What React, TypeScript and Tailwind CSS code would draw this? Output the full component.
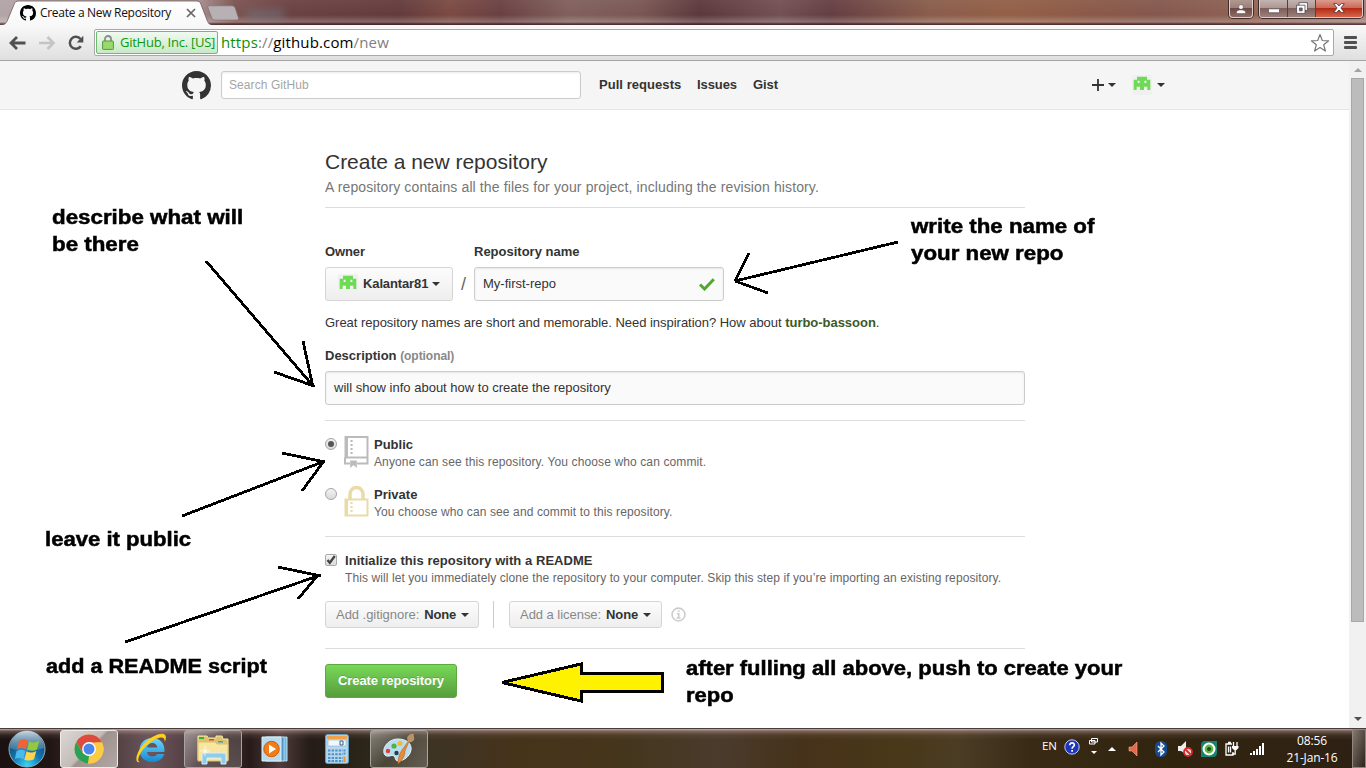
import React from "react";

const MARK =
  "M8 0C3.58 0 0 3.58 0 8c0 3.54 2.29 6.53 5.47 7.59.4.07.55-.17.55-.38 0-.19-.01-.82-.01-1.49-2.01.37-2.53-.49-2.69-.94-.09-.23-.48-.94-.82-1.13-.28-.15-.68-.52-.01-.53.63-.01 1.08.58 1.23.82.72 1.21 1.87.87 2.33.66.07-.52.28-.87.51-1.07-1.78-.2-3.64-.89-3.64-3.95 0-.87.31-1.59.82-2.15-.08-.2-.36-1.02.08-2.12 0 0 .67-.21 2.2.82.64-.18 1.32-.27 2-.27.68 0 1.36.09 2 .27 1.53-1.04 2.2-.82 2.2-.82.44 1.1.16 1.92.08 2.12.51.56.82 1.27.82 2.15 0 3.07-1.87 3.75-3.65 3.95.29.25.54.73.54 1.48 0 1.07-.01 1.93-.01 2.2 0 .21.15.46.55.38A8.013 8.013 0 0016 8c0-4.42-3.58-8-8-8z";

const Mark = ({ className }: { className: string }) => (
  <svg viewBox="0 0 16 16" className={className} fill="currentColor">
    <path d={MARK} />
  </svg>
);

const Avatar = () => (
  <svg viewBox="0 0 20 20" className="size-5 shrink-0">
    <rect width="20" height="20" rx="2" fill="#f0f0f0" />
    <path
      fill="#6ddb55"
      fillRule="evenodd"
      d="M5 1.700h10V4.700h3.300V15H15.400v-3.200h-3.400V15H8v-3.200H4.600V15H1.700V4.700H5zM5.600 5.700v2.300h2V5.700zM12.400 5.700v2.300h2V5.700z"
    />
  </svg>
);

const Caret = () => (
  <svg viewBox="0 0 8 4" className="h-1 w-2 shrink-0" fill="#333">
    <path d="M0 0h8L4 4z" />
  </svg>
);

const TitleBar = () => (
  <header className="relative flex h-[25px] shrink-0 items-start bg-[linear-gradient(90deg,#b3a5a6_0px,#a48c8c_200px,#7c5350_235px,#6b4143_290px,#633b3c_400px,#7a4a42_450px,#6a4042_500px,#80605c_570px,#7a5653_640px,#5c383c_700px,#735052_780px,#643e42_830px,#8a5d4b_930px,#935f46_1010px,#8a5848_1100px,#84584e_1160px,#8e6152_1240px,#a08077_1366px)]">
    <div className="absolute inset-0 bg-[linear-gradient(180deg,rgba(255,255,255,0.05)_0px,rgba(255,255,255,0)_15px,rgba(255,255,255,0.22)_22px,rgba(60,30,35,0.7)_24px,rgba(60,30,35,0.7)_25px)]" />
    <div className="absolute left-[246px] top-[10px] h-[10px] w-[38px] bg-[#6f7f8a]/50 blur-[4px]" />
    <svg className="absolute left-0 top-0 h-[25px] w-[244px]" viewBox="0 0 244 25">
      <defs>
        <linearGradient id="tab" x1="0" x2="0" y1="0" y2="1">
          <stop offset="0" stopColor="#fff" />
          <stop offset="1" stopColor="#f8f8f8" />
        </linearGradient>
      </defs>
      <path d="M0 25.5C5 25 6.500 23 8 19l6-14.500C15 1.800 16 1 19 1h177c3 0 4 .8 5 3.500l6 15.500c1.500 4 3 5 6 5.500z" fill="url(#tab)" stroke="#6e5a5c" strokeWidth=".8" />
      <path d="M208 8c-.6-1.500.2-2.200 1.500-2.200h22c2 0 3 .7 3.600 2l3.200 9.700c.5 1.600-.2 2.500-1.500 2.500h-21.300c-2 0-3-.5-3.600-2z" fill="#b7b1b6" stroke="#836b6d" strokeWidth=".6" />
    </svg>
    <div className="relative flex h-[25px] w-[204px] items-center pl-5">
      <Mark className="size-4 text-black" />
      <span className="ml-1 w-[136px] whitespace-nowrap font-['Open_Sans','Noto_Sans',sans-serif] text-[12px] tracking-[-0.3px] text-[#111]">
        Create a New Repository
      </span>
      <svg viewBox="0 0 10 10" className="ml-[10px] size-[10px]" stroke="#666" strokeWidth="1.700">
        <path d="M1 1l8 8M9 1L1 9" />
      </svg>
    </div>
    <div className="relative ml-auto mr-[3px] flex h-[18px] items-start">
      <div className="flex h-full w-6 items-center justify-center rounded-b-[4px] border border-t-0 border-[#e0cfcb] bg-[linear-gradient(#b09891_0%,#9d8179_45%,#6d4a45_50%,#8e6b64_100%)] shadow-[0_0_0_1px_#402c2c]">
        <svg viewBox="0 0 10 10" className="size-[10px]" fill="#fff" stroke="#50383a" strokeWidth=".4">
          <circle cx="5" cy="3" r="2.300" />
          <path d="M.5 9.500V8C.5 6.500 3 6 5 6s4.500.5 4.500 2v1.500z" />
        </svg>
      </div>
      <div className="ml-[6px] flex h-full overflow-hidden rounded-b-[4px] border border-t-0 border-[#dccbc8] shadow-[0_0_0_1px_#402c2c]">
        <div className="flex w-7 items-center justify-center border-r border-[#54403f] bg-[linear-gradient(#c3b3b1_0%,#ad9792_45%,#7d5f5b_50%,#9c807a_100%)]">
          <svg viewBox="0 0 12 6" className="mt-1 h-[6px] w-3">
            <rect x=".5" y=".8" width="11" height="4" rx=".5" fill="#fff" stroke="#5d5158" strokeWidth=".8" />
          </svg>
        </div>
        <div className="flex w-7 items-center justify-center border-r border-[#54403f] bg-[linear-gradient(#c3b3b1_0%,#ad9792_45%,#7d5f5b_50%,#9c807a_100%)]">
          <svg viewBox="0 0 12 12" className="mt-[-2px] size-3" stroke="#4d4650" strokeWidth=".8">
            <path d="M3 .6h8.400v8H3z" fill="#fff" />
            <path d="M.6 3.200h8.400v8.200H.6z" fill="#fff" />
            <path d="M3.400 6h2.800v2.800H3.400z" fill="#85696a" />
          </svg>
        </div>
        <div className="flex w-[46px] items-center justify-center bg-[linear-gradient(#dc9b8e_0%,#cc6a57_45%,#b42b15_50%,#d5654a_100%)]">
          <svg viewBox="0 0 12 10" className="mt-[-2px] h-[10px] w-3">
            <path d="M.6.6h3.200L6 3 8.200.6h3.200L7.900 5l3.500 4.400H8.200L6 7 3.800 9.400H.6L4.100 5z" fill="#fff" stroke="#5a3a42" strokeWidth=".9" />
          </svg>
        </div>
      </div>
    </div>
  </header>
);

const Toolbar = () => (
  <nav className="flex h-9 shrink-0 items-center border-b border-[#a5a5a5] bg-linear-to-b from-[#f9f9f9] to-[#dfdfdf] pl-[9px]">
    <svg viewBox="0 0 17 14" className="h-[14px] w-[17px]" fill="none" stroke="#505050" strokeWidth="2.800">
      <path d="M2 7h14.500M8 1L2 7l6 6" />
    </svg>
    <svg viewBox="0 0 17 14" className="ml-[13px] h-[14px] w-[17px]" fill="none" stroke="#c4c4c4" strokeWidth="2.600">
      <path d="M0 7h14.500M8.500 1l6 6-6 6" />
    </svg>
    <svg viewBox="0 0 16 16" className="ml-3 size-4" fill="none" stroke="#505050" strokeWidth="2.500">
      <path d="M12.800 11.200A6 6 0 1 1 12.500 4" />
      <path d="M15.300.8v6.700H8.700z" fill="#505050" stroke="none" />
    </svg>
    <div className="ml-[10px] flex h-[27px] w-[1240px] items-center rounded-[2px] border border-[#a9a9a9] bg-white px-px">
      <div className="flex h-[23px] w-[122px] items-center rounded-[2px] border border-[#6dbb71] bg-linear-to-b from-[#f0faf0] to-[#c9e8c9] pl-[5px]">
        <svg viewBox="0 0 12 15" className="h-[15px] w-3">
          <path d="M3 7V4a3 3 0 0 1 6 0v3" fill="none" stroke="#8d8d8d" strokeWidth="1.800" />
          <rect x=".6" y="6" width="10.800" height="8.400" rx=".6" fill="#98db6a" stroke="#5c9444" strokeWidth="1" />
        </svg>
        <span className="ml-[6px] whitespace-nowrap font-['Open_Sans','Noto_Sans',sans-serif] text-[13px] tracking-[-0.25px] text-[#0b9a0b]">GitHub, Inc. [US]</span>
      </div>
      <span className="ml-[3px] whitespace-nowrap font-['Open_Sans','Noto_Sans',sans-serif] text-[15px] tracking-[0.14px] text-[#808080]">
        <span className="text-[#0b8f0b]">https</span>://<span className="text-black">github.com</span>/new
      </span>
      <svg viewBox="0 0 20 20" className="ml-auto mr-[2px] size-5" fill="#fff" stroke="#777" strokeWidth="1.200" strokeLinejoin="round">
        <path d="M10 1.500l2.300 6 6.400.3-5 4 1.700 6.200L10 14.500 4.600 18l1.700-6.200-5-4 6.400-.3z" />
      </svg>
    </div>
    <svg viewBox="0 0 13 13" className="ml-[10px] h-[13px] w-[13px]" fill="#505050">
      <rect width="13" height="3" rx="1" />
      <rect y="5" width="13" height="3" rx="1" />
      <rect y="10" width="13" height="3" rx="1" />
    </svg>
  </nav>
);

const SiteHeader = () => (
  <div className="flex h-[49px] shrink-0 items-center border-b border-[#e5e5e5] bg-[#f5f5f5] pl-[182px] text-[13px] font-bold text-[#333]">
    <Mark className="size-[29px]" />
    <div className="ml-[10px] flex h-7 w-[360px] items-center rounded-[3px] border border-[#ccc] bg-white pl-[7px] text-[12px] font-normal text-[#a5a5a5] shadow-[inset_0_1px_2px_rgba(0,0,0,0.075)]">
      <span className="tracking-[0.08px]">Search GitHub</span>
    </div>
    <span className="ml-[18px] w-[98px] tracking-[0.05px]">Pull requests</span>
    <span className="w-[56px] tracking-[-0.08px]">Issues</span>
    <span className="tracking-[-0.08px]">Gist</span>
    <div className="ml-auto mr-[184px] flex items-center">
      <svg viewBox="0 0 12 12" className="size-3" stroke="#333" strokeWidth="1.800">
        <path d="M6 0v12M0 6h12" />
      </svg>
      <span className="ml-1 mr-[16px]"><Caret /></span>
      <Avatar />
      <span className="ml-[5px]"><Caret /></span>
    </div>
  </div>
);

const BookIcon = () => (
  <svg viewBox="0 0 25 32" className="h-8 w-[25px] shrink-0" fill="none" stroke="#bbb" strokeWidth="2">
    <path d="M1.500 1h22v20.500h-22zM1 21.500v6h5M13 27.500h10.500v-6" />
    <path d="M2.500 1v20" strokeWidth="3" />
    <path d="M6.200 24.500h6.600V32l-3.300-3-3.300 3z" fill="#bbb" stroke="none" />
    <path d="M7.500 4v15" strokeDasharray="2 2" strokeWidth="2.200" />
  </svg>
);

const LockIcon = () => (
  <svg viewBox="0 0 25 31" className="h-[31px] w-[25px] shrink-0" fill="none" stroke="#e9dba5" strokeWidth="2">
    <path d="M6 13V8a6.500 6.500 0 0 1 13 0v5" strokeWidth="3.500" />
    <path d="M1.500 13.500h22v16h-22z" />
    <path d="M2.500 13v17" strokeWidth="3" />
    <path d="M7.500 16v11" strokeDasharray="2 2" strokeWidth="2.200" />
  </svg>
);

const Radio = ({ on }: { on?: boolean }) => (
  <span className="mt-[2px] flex size-3 shrink-0 items-center justify-center rounded-full border border-[#a5a5a5] bg-linear-to-b from-[#f2f2f2] to-[#dadada]">
    {on && <span className="size-[6px] rounded-full bg-[#555]" />}
  </span>
);

const Field = ({ className, children }: { className: string; children: React.ReactNode }) => (
  <div className={`flex h-[34px] items-center rounded-[3px] border border-[#ccc] bg-[#fafafa] pl-2 shadow-[inset_0_1px_2px_rgba(0,0,0,0.075)] ${className}`}>{children}</div>
);

const MenuButton = ({ label, className }: { label: string; className: string }) => (
  <div className={`flex h-[27px] items-center rounded-[3px] border border-[#d5d5d5] bg-linear-to-b from-[#fcfcfc] to-[#eee] pl-[10px] ${className}`}>
    <span className="tracking-[-0.04px] text-[#888]">{label}</span>
    <span className="ml-[5px] flex items-center gap-[5px] font-bold tracking-[-0.15px] text-[#333]">
      None <Caret />
    </span>
  </div>
);

const Content = () => (
  <main className="ml-[325px] flex w-[700px] flex-col whitespace-nowrap text-[13px] leading-[18px] text-[#333]">
    <h1 className="mt-[39px] h-[26px] text-[21px] leading-[26px] tracking-[-0.02px]">Create a new repository</h1>
    <p className="h-[33px] border-b border-[#ddd] pt-[3px] text-[14px] tracking-[0.12px] text-[#767676]">
      A repository contains all the files for your project, including the revision history.
    </p>
    <div className="mt-[35px] flex font-bold">
      <span className="w-[149px] tracking-[-0.1px]">Owner</span>
      <span>Repository name</span>
    </div>
    <div className="mt-[6px] flex items-center">
      <div className="flex h-[34px] w-[128px] items-center rounded-[3px] border border-[#d5d5d5] bg-linear-to-b from-[#fcfcfc] to-[#eee] pl-3 font-bold">
        <Avatar />
        <span className="ml-[5px] w-[69px] tracking-[-0.12px]">Kalantar81</span>
        <Caret />
      </div>
      <span className="w-[21px] text-center text-[18px] text-[#666]">/</span>
      <Field className="w-[250px]">
        <span>My-first-repo</span>
        <svg viewBox="0 0 16 13" className="ml-auto mr-2 h-[13px] w-4" fill="none" stroke="#55a532" strokeWidth="3">
          <path d="M1 6.500l4.500 4.500L14.800 1.200" />
        </svg>
      </Field>
    </div>
    <p className="mt-[13px] tracking-[-0.03px]">
      Great repository names are short and memorable. Need inspiration? How about <b className="text-[#3c5a26]">turbo-bassoon</b>.
    </p>
    <div className="mt-[15px] font-bold">
      Description <span className="text-[12px] tracking-[-0.05px] text-[#888]">(optional)</span>
    </div>
    <Field className="mt-[6px] w-full">will show info about how to create the repository</Field>
    <hr className="mt-[15px] border-[#ddd]" />
    <div className="mt-[14px] flex h-[50px]">
      <div className="mt-px"><Radio on /></div>
      <div className="ml-[7px] mt-px"><BookIcon /></div>
      <div className="ml-[5px]">
        <div className="h-[18px] pt-px font-bold">Public</div>
        <div className="text-[12px] tracking-[0.12px] text-[#666]">Anyone can see this repository. You choose who can commit.</div>
      </div>
    </div>
    <div className="flex h-[51px]">
      <div className="mt-px"><Radio /></div>
      <div className="ml-[7px] mt-px"><LockIcon /></div>
      <div className="ml-[5px]">
        <div className="h-[18px] pt-px font-bold">Private</div>
        <div className="text-[12px] tracking-[0.12px] text-[#666]">You choose who can see and commit to this repository.</div>
      </div>
    </div>
    <hr className="border-[#ddd]" />
    <div className="mt-[14px] flex h-[50px]">
      <span className="mt-[3px] flex size-3 items-center justify-center rounded-[2px] border border-[#aaa] bg-linear-to-b from-[#f4f4f4] to-[#dcdcdc]">
        <svg viewBox="0 0 10 10" className="size-[10px] shrink-0" fill="none" stroke="#444" strokeWidth="2.300">
          <path d="M1.500 5l2.300 2.800L8.800 1" />
        </svg>
      </span>
      <div className="ml-2">
        <div className="h-[18px] pt-px font-bold tracking-[0.05px]">Initialize this repository with a README</div>
        <div className="text-[12px] tracking-[0.09px] text-[#666]">This will let you immediately clone the repository to your computer. Skip this step if you’re importing an existing repository.</div>
      </div>
    </div>
    <div className="flex items-center">
      <MenuButton className="w-[154px]" label="Add .gitignore:" />
      <span className="ml-[14px] h-[27px] w-[16px] border-l border-[#ccc]" />
      <MenuButton className="w-[153px]" label="Add a license:" />
      <svg viewBox="0 0 14 14" className="ml-[9px] size-[15px]" fill="none" stroke="#ccc" strokeWidth="1.500">
        <circle cx="7" cy="7" r="6" />
        <path d="M5.500 6.300h1.700v4M5.300 10.300h3.600M6.300 3.900h1.700" />
      </svg>
    </div>
    <hr className="mt-[20px] border-[#ddd]" />
    <div className="mt-[15px] flex h-[34px] w-[132px] items-center justify-center rounded-[3px] border border-[#5ca941] bg-linear-to-b from-[#79d858] to-[#569e3d] font-bold tracking-[-0.1px] text-white [text-shadow:0_-1px_0_rgba(0,0,0,0.15)]">
      Create repository
    </div>
  </main>
);

const Note = ({ className, children }: { className: string; children: React.ReactNode }) => (
  <div className={`absolute origin-left whitespace-nowrap text-[20px] font-bold leading-[27px] text-black [-webkit-text-stroke:0.5px_#000] ${className}`}>{children}</div>
);

const Annotations = () => (
  <>
    <svg className="absolute left-0 top-0 h-[728px] w-[1366px]" viewBox="0 0 1366 728" fill="none" stroke="#000" strokeWidth="2.800" shapeRendering="crispEdges">
      <path d="M206 261L314 387M303 341l10 46M274 372l40 14" />
      <path d="M898 242L735 281M749 253l-14 28M735 281l33 12" />
      <path d="M182 516L325 461M282 453l43 9M302 491l22-30" />
      <path d="M125 642L321 575M278 567l43 9M298 599l20-24" />
      <path d="M502 682.500L581 664v9h81.500v18.500H581V701z" fill="#fff200" strokeWidth="3" />
    </svg>
    <Note className="left-[52px] top-[204px] scale-x-[1.117]">describe what will<br />be there</Note>
    <Note className="left-[911px] top-[213px] scale-x-[1.115]">write the name of<br />your new repo</Note>
    <Note className="left-[45px] top-[526px] scale-x-[1.105]">leave it public</Note>
    <Note className="left-[46px] top-[653px] scale-x-[1.08]">add a README script</Note>
    <Note className="left-[686px] top-[655px] scale-x-[1.1]">after fulling all above, push to create your<br />repo</Note>
  </>
);

const Scrollbar = () => (
  <div className="flex w-[17px] shrink-0 flex-col items-center bg-[#f1f1f1]">
    <svg viewBox="0 0 8 4" className="mt-[7px] h-1 w-2" fill="#a3a3a3"><path d="M0 4h8L4 0z" /></svg>
    <div className="mt-[6px] h-[544px] w-[13px] border border-[#a8a8a8] bg-[#bcbcbc]" />
    <svg viewBox="0 0 8 4" className="mb-[7px] mt-auto h-1 w-2" fill="#505050"><path d="M0 0h8L4 4z" /></svg>
  </div>
);

const StartOrb = () => (
  <svg viewBox="0 0 38 38" className="size-[38px]">
    <defs>
      <radialGradient id="orb" cx=".5" cy=".95" r=".9">
        <stop offset="0" stopColor="#35d6ff" />
        <stop offset=".45" stopColor="#1274ac" />
        <stop offset="1" stopColor="#163f63" />
      </radialGradient>
      <linearGradient id="orbShine" x1="0" x2="0" y1="0" y2="1">
        <stop offset="0" stopColor="#e8f2f6" stopOpacity=".85" />
        <stop offset="1" stopColor="#8bb4ca" stopOpacity=".25" />
      </linearGradient>
    </defs>
    <circle cx="19" cy="19" r="18" fill="url(#orb)" stroke="#8eaebb" />
    <path d="M2 18a17 17 0 0 1 34 0c-10 4-24 4-34 0z" fill="url(#orbShine)" />
    <g transform="translate(-1.200 -1.500) scale(1.120)">
      <path d="M11 11c3-2 5-1.500 8 0l-2 7.500c-3-1.500-5-1.500-8 0z" fill="#ee6438" />
      <path d="M20 11.500c3 1.500 5 1.300 9-.5l-2 7.500c-3 1.800-6 1.700-9 .3z" fill="#94c83d" />
      <path d="M8.700 20c3-1.500 5-1.500 8 0l-2 7.500c-3-1.500-5-1.500-7.500 0z" fill="#4cb8ee" />
      <path d="M17.600 20.300c3 1.500 5 1.500 8.700-.3l-2 7.500c-3 1.500-5.500 1.500-8.700.3z" fill="#ffd34a" />
    </g>
  </svg>
);

const ChromeIcon = () => (
  <svg viewBox="0 0 30 30" className="size-[30px]">
    <circle cx="15" cy="15" r="14.500" fill="#fbcb43" />
    <path d="M15 .5a14.500 14.500 0 0 1 13 8H15L8.500 18.500 2.300 8A14.500 14.500 0 0 1 15 .5z" fill="#dd4b3e" />
    <path d="M2.300 8l6.600 11.300L15 22l-1 7.500A14.500 14.500 0 0 1 2.300 8z" fill="#2aa159" />
    <path d="M13.800 29.500L21 18l.5-9.500H28a14.500 14.500 0 0 1-14.200 21z" fill="#fbcb43" />
    <circle cx="15" cy="15" r="6.900" fill="#fff" />
    <circle cx="15" cy="15" r="5.500" fill="#4a86ec" />
  </svg>
);

const IeIcon = () => (
  <svg viewBox="0 0 32 32" className="size-8">
    <defs>
      <linearGradient id="ie" x1="0" x2="0" y1="0" y2="1">
        <stop offset="0" stopColor="#6fd8ff" />
        <stop offset="1" stopColor="#1689d2" />
      </linearGradient>
    </defs>
    <path fillRule="evenodd" d="M17 5c8 0 13 5 12.500 14H12c.5 3 2.500 4.500 5.500 4.500 2.200 0 3.700-.8 4.700-2.500h7C27.500 26.500 23 29 17 29 9.500 29 4.500 24 4.500 17S10 5 17 5zm-5 9.500h10.300c-.5-3-2.300-4.500-5-4.500s-4.700 1.700-5.300 4.500z" fill="url(#ie)" />
    <path d="M5 29C-1 31 1 20 7 13 15 3 28-2 30.500 2.500c.8 1.500.4 4-.8 6.500.3-3-1-5-4-4.500C20 5.500 12 11 7 18c-4 6-5 10.500-2 11z" fill="#fcd01b" />
  </svg>
);

const ExplorerIcon = () => (
  <svg viewBox="0 0 34 32" className="h-8 w-[34px]">
    <path d="M2 3h9l1 2h8V3h6l1 3h5v21H2z" fill="#dcc36e" stroke="#f8e9a6" />
    <path d="M3 4h5v2H3z" fill="#27b635" />
    <path d="M13 6h5v1.500h-5z" fill="#db4c35" />
    <path d="M22 8h5v1.500h-5z" fill="#329ee0" />
    <path d="M2 9h17l2 2h11v17H2z" fill="#f8e5a0" stroke="#dcc16d" />
    <path d="M6 31v-8c0-2 1-3 3-3h18c2 0 3 1 3 3v8h-5v-6H11v6z" fill="#8fcbea" stroke="#d5f0fb" />
    <path d="M9 13v10M4 18h10M7 16l4 4M11 16l-4 4" stroke="#fff" strokeWidth=".7" />
  </svg>
);

const MediaIcon = () => (
  <svg viewBox="0 0 27 26" className="h-[26px] w-[27px]">
    <path d="M8 2l18-1v24l-18-1z" fill="#76b5db" stroke="#bee0f2" />
    <path d="M5 1h18v24H5z" fill="#4e94c4" stroke="#a9d7ef" />
    <path d="M1 1h19v24H1z" fill="#b7daed" stroke="#def1f9" />
    <circle cx="10.500" cy="13" r="7.700" fill="#f17c1a" stroke="#d45d08" />
    <path d="M8 8.500v9l7-4.500z" fill="#fff" />
  </svg>
);

const CalcIcon = () => (
  <svg viewBox="0 0 24 30" className="h-[30px] w-6">
    <rect x=".7" y=".7" width="22.600" height="28.600" rx="1.500" fill="#b5d8ee" stroke="#6faed6" />
    <path d="M2 2h20v3H2z" fill="#f0a24a" />
    <path d="M3 6h18v6H3z" fill="#eff8fc" stroke="#89b3cf" strokeWidth=".6" />
    <path d="M15 7h3v4h-3z" fill="none" stroke="#405f83" />
    <path d="M3 16.500h15M3 20.200h15M3 24h15M3 27h15" stroke="#4f91c4" strokeWidth="2" strokeDasharray="2.400 1.200" />
    <path d="M19.500 15.500v5" stroke="#4f91c4" strokeWidth="2" strokeDasharray="2 1" />
    <path d="M19.500 22.500V28" stroke="#f0972c" strokeWidth="2.200" />
  </svg>
);

const PaintIcon = () => (
  <svg viewBox="0 0 34 32" className="h-8 w-[34px]">
    <path d="M16 6c8 0 14 4 13 11-1 6-7 11-13 11-3 0-2-3-4-5s-6 2-9-1C-1 17 5 6 16 6z" fill="#b9dcef" stroke="#e4f4fb" />
    <circle cx="6" cy="18" r="2.200" fill="#e23b30" />
    <circle cx="12" cy="13" r="2.600" fill="#4cb344" />
    <circle cx="18" cy="10.500" r="2.500" fill="#f3b92f" />
    <circle cx="14.500" cy="20" r="2.200" fill="#263d50" />
    <path d="M28 6l-5 12c0 5-3 10-7 13 0-5 1-10 4-14z" fill="#e78b37" stroke="#aa551a" strokeWidth=".5" />
    <path d="M25 5c1-3 4-5 7-4-1 1 1 4 0 6s-5 3-6 2z" fill="#b99265" />
  </svg>
);

const TASK_STYLE = {
  plain: "",
  open: "border border-[#a9a3a1] bg-[linear-gradient(135deg,rgba(255,255,255,0.42),rgba(255,255,255,0.13)_50%,rgba(255,255,255,0.2))]",
  focused: "border border-[#efebe9] bg-[linear-gradient(135deg,#dcd7d5_0%,#c3bbb8_48%,#a0928f_52%,#b1a7a4_100%)]",
};

const Task = ({ kind = "plain", className, children }: { kind?: keyof typeof TASK_STYLE; className: string; children: React.ReactNode }) => (
  <div className={`flex h-[38px] items-center justify-center rounded-[3px] ${TASK_STYLE[kind]} ${className}`}>{children}</div>
);

const Tray = () => (
  <div className="ml-auto flex h-full items-center font-['Open_Sans','Noto_Sans',sans-serif] text-[12px] text-white">
    <span className="w-[22px] pb-[5px] text-[11.500px] tracking-[-0.2px]">EN</span>
    <svg viewBox="0 0 16 16" className="mb-[4px] size-4">
      <circle cx="8" cy="8" r="7.200" fill="#1d36bd" stroke="#c3c9ea" />
      <path d="M5.800 6.200C5.800 3 10.400 3.300 10.300 6c0 1.800-2.200 1.600-2.200 3.800M8.100 11v1.800" fill="none" stroke="#fff" strokeWidth="1.700" />
    </svg>
    <svg viewBox="0 0 10 18" className="mb-[6px] ml-[9px] h-[18px] w-[10px]" fill="none" stroke="#fff">
      <path d="M2.500 1.500h6v3.500h-6zM.5 3.500h5.500V7h-5.500z" fill="#33281b" />
      <path d="M2 14h6L5 17z" fill="#fff" stroke="none" />
    </svg>
    <svg viewBox="0 0 8 4" className="ml-[9px] h-1 w-2" fill="#fff"><path d="M0 4h8L4 0z" /></svg>
    <svg viewBox="0 0 12 14" className="ml-[12px] h-[14px] w-3">
      <path d="M1 5h3l5-5v14L4 9H1z" fill="#e3694a" stroke="#ffc1a7" strokeWidth=".5" />
    </svg>
    <svg viewBox="0 0 12 16" className="ml-[15px] h-4 w-3">
      <rect width="12" height="16" rx="5.500" fill="#144a91" />
      <path d="M3 5l6 6-3 3V2l3 3-6 6" fill="none" stroke="#fff" strokeWidth="1.300" />
    </svg>
    <svg viewBox="0 0 16 16" className="ml-[10px] size-4">
      <path d="M1 5h3l5-5v13L4 10H1z" fill="#eee" />
      <circle cx="11" cy="11" r="4" fill="#f6dddd" stroke="#dd2726" strokeWidth="1.800" />
      <path d="M8.500 8.500l5 5" stroke="#dd2726" strokeWidth="1.800" />
    </svg>
    <svg viewBox="0 0 16 16" className="ml-[8px] size-4">
      <path d="M4 0h12v12c0 3-2 4-4 4H0V4c0-2 1-4 4-4z" fill="#14836f" />
      <circle cx="8" cy="8" r="6.500" fill="#fff" />
      <circle cx="8" cy="8" r="4.400" fill="#60b43f" />
      <circle cx="8" cy="8" r="2" fill="#174b25" />
    </svg>
    <svg viewBox="0 0 14 16" className="ml-[8px] h-4 w-[14px]" fill="none" stroke="#fff" strokeWidth="1.300">
      <path d="M7 3H1v11h7v-3M3 1.500h3M3.500 5.500v6M5.500 5.500v6" />
      <path d="M8.500 1v5M12 1v5M10.200 9v4H7" />
      <path d="M7 5h6.500v2l-2 2H9L7 7z" fill="#fff" stroke="none" />
    </svg>
    <svg viewBox="0 0 15 12" className="ml-[11px] h-3 w-[15px]" fill="#fff">
      <path d="M0 10h2v2H0zM3 8h2v4H3zM6 6h2v6H6zM9 3h2v9H9zM12 0h2v12h-2z" />
    </svg>
    <div className="ml-[15px] w-[64px] text-center leading-[17px] tracking-[-0.15px]">08:56<br />21-Jan-16</div>
    <div className="ml-[8px] h-full w-[14px] border border-[#8f8680] bg-linear-to-br from-[#83796e] to-[#30251d]" />
  </div>
);

const Taskbar = () => (
  <footer className="flex h-10 shrink-0 items-center border-t border-[#493d3c] bg-[linear-gradient(180deg,rgba(216,195,190,0.85)_0px,rgba(181,153,148,0.5)_2px,rgba(120,90,85,0.25)_6px,rgba(0,0,0,0)_11px),linear-gradient(90deg,#1a1110_0px,#211614_50px,#6b565b_150px,#3e2c2d_220px,#271b1a_250px,#503b3d_280px,#241c16_310px,#2c2718_370px,#3d3425_430px,#46331a_520px,#44361c_620px,#4a3b2c_720px,#46321a_800px,#493819_900px,#4b3d24_960px,#382a15_1030px,#31240f_1180px,#2e2114_1366px)]">
    <div className="ml-[8px]"><StartOrb /></div>
    <Task kind="focused" className="ml-[14px] w-[58px]"><ChromeIcon /></Task>
    <Task className="ml-[17px] w-8"><IeIcon /></Task>
    <Task kind="open" className="ml-[17px] w-[58px]"><ExplorerIcon /></Task>
    <Task className="ml-[19px] w-[27px]"><MediaIcon /></Task>
    <Task className="ml-[37px] w-6"><CalcIcon /></Task>
    <Task kind="open" className="ml-[21px] w-[58px]"><PaintIcon /></Task>
    <Tray />
  </footer>
);

export default function App() {
  return (
    <div className="relative flex h-[768px] w-[1366px] flex-col overflow-hidden bg-white font-['Liberation_Sans',Arial,sans-serif]">
      <TitleBar />
      <Toolbar />
      <div className="flex min-h-0 flex-1">
        <div className="flex w-[1349px] flex-col">
          <SiteHeader />
          <Content />
        </div>
        <Scrollbar />
      </div>
      <Annotations />
      <Taskbar />
    </div>
  );
}
